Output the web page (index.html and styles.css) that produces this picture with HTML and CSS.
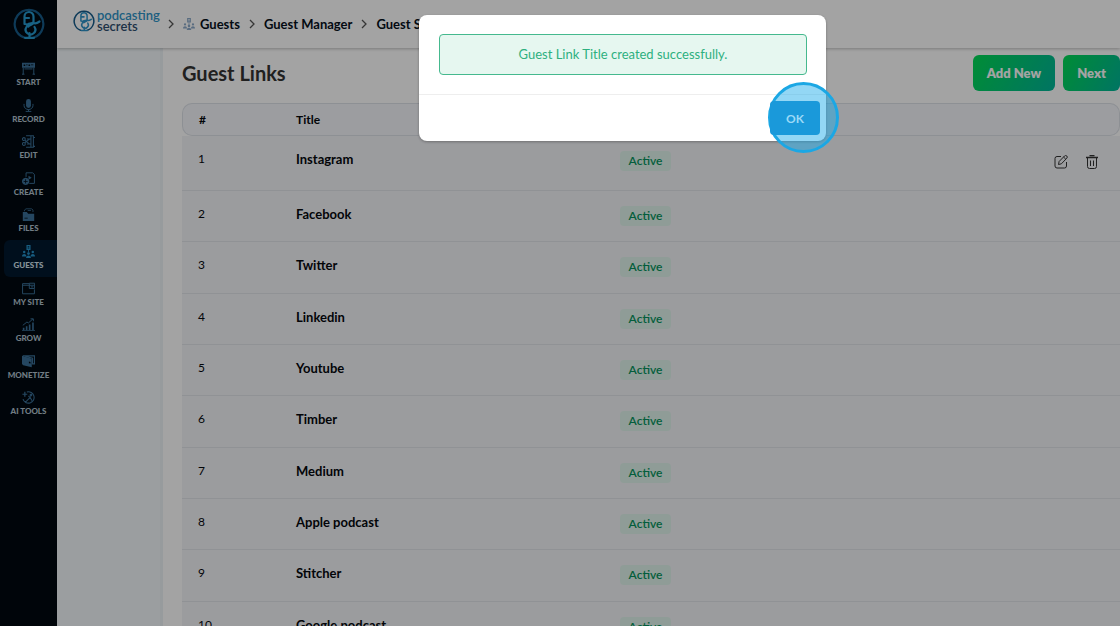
FILE: index.html
```html
<!DOCTYPE html>
<html lang="en">
<head>
<meta charset="utf-8">
<meta name="viewport" content="width=device-width, initial-scale=1">
<title>Guest Links</title>
<link rel="stylesheet" href="styles.css">
</head>
<body>
<svg class="sprite" aria-hidden="true">
  <symbol id="mic-mark" viewBox="0 0 32 32">
    <g fill="none" stroke="currentColor" stroke-linecap="round" stroke-linejoin="round">
      <path class="mark-ring" d="M11 29.500A14.300 14.300 0 1 1 21 29.500" stroke-width="2.200"/>
      <path stroke-width="2.200" d="M11.500 16V8.500a4.500 4.500 0 0 1 9 0V15M12 10h4M20.500 14c-1 2.500-4 0-6 2.500M20.500 15c2 1 4 0 6-1.500M20.500 15c-1 2-4 2-5 3.500M11.500 16c4 0 3 2 2 3a4.800 4.800 0 1 0 8 0M16.500 25v4.500M12 29.800h9"/>
    </g>
  </symbol>
  <symbol id="people" viewBox="0 0 16 16">
    <g fill="currentColor">
      <path fill-rule="evenodd" d="M5.500 0h5v6h-5zM7 1.200v1h2v-1zm0 2v1h2v-1z"/>
      <path d="M7.500 6h1v3h-1z"/>
      <circle cx="2.700" cy="8.500" r="1.500"/><circle cx="13.300" cy="8.500" r="1.500"/><circle cx="8" cy="10.500" r="1.700"/>
      <path d="M0 14c0-4 5.400-4 5.400 0zM10.600 14c0-4 5.400-4 5.400 0zM5 16c0-4.200 6-4.200 6 0z"/>
    </g>
  </symbol>
  <symbol id="chevron" viewBox="0 0 8 10"><path d="M2 1l4 4-4 4" fill="none" stroke="currentColor" stroke-width="1.300"/></symbol>
</svg>

<div class="app">
  <aside class="sidebar">
    <a class="brand-mark" href="#" aria-label="Home"><svg><use href="#mic-mark"/></svg></a>
    <nav class="menu" aria-label="Main">
      <a class="menu-item" href="#"><svg viewBox="0 0 16 16"><path fill-rule="evenodd" fill="currentColor" d="M0 1h16v6H0zM2 3v2h2V3zm3 0v1h2V3zm3 0v2h2V3zm3 0v1h3V3z"/><path d="M1.500 7v8M14.500 7v8M0 15h3M13 15h3M3 8.500h10" stroke="currentColor" stroke-width="1.200"/></svg>START</a>
      <a class="menu-item" href="#"><svg viewBox="0 0 16 16"><rect x="5" y="0" width="6" height="11" rx="3" fill="currentColor"/><path d="M2.500 6v2a5.500 5 0 0 0 11 0V6M8 13v2.300M4.500 15.300h7" fill="none" stroke="currentColor" stroke-width="1.200"/></svg>RECORD</a>
      <a class="menu-item" href="#"><svg viewBox="0 0 16 16" fill="none" stroke="currentColor" stroke-width="1.300"><path d="M5 1h9v14H5M11 1v14M6 5h5M6 11h5M14 3h2M14 14h2"/><circle cx="2.300" cy="5" r="1.800"/><circle cx="2.300" cy="11" r="1.800"/><path d="M3.500 6.500L9 11M3.500 9.500L9 5"/></svg>EDIT</a>
      <a class="menu-item" href="#"><svg viewBox="0 0 16 16"><path d="M5 6V1h8l2.300 2v11H9" fill="none" stroke="currentColor" stroke-width="1.200"/><path d="M8 4.500l4 2.500-4 2.500z" fill="currentColor"/><path fill-rule="evenodd" fill="currentColor" d="M4.500 7a4.500 4.500 0 1 0 .01 0zM4 9h1v2h2v1H5v2H4v-2H2v-1h2z"/></svg>CREATE</a>
      <a class="menu-item" href="#"><svg viewBox="0 0 16 16"><path d="M3 4V2.500L5 1h7l1.500 1.500V5M7 3h4" fill="none" stroke="currentColor"/><path fill-rule="evenodd" fill="currentColor" d="M1 5h5l1.500 2H15v9H1zM3 12v1h4v-1z"/></svg>FILES</a>
      <a class="menu-item active" href="#" aria-current="page"><svg><use href="#people"/></svg>GUESTS</a>
      <a class="menu-item" href="#"><svg viewBox="0 0 16 16" fill="none" stroke="currentColor" stroke-width="1.200"><path d="M9 2H.700v12.500h14.600V9M.700 4H9"/><path d="M9 1.500h6.500V8H9zM9 4h6.500M11 6h3"/></svg>MY SITE</a>
      <a class="menu-item" href="#"><svg viewBox="0 0 16 16" fill="none" stroke="currentColor"><path d="M1 9l5-4 2 1 5.500-5M10.500 1H14v3" stroke-width="1.200"/><path d="M2 12v3M5.700 10v5M9.400 8v7M13.500 5.500V15" stroke-width="2"/><path d="M0 15.500h16"/></svg>GROW</a>
      <a class="menu-item" href="#"><svg viewBox="0 0 16 16"><path d="M1 1h14.500v10H13V4L4 1.800" fill="none" stroke="currentColor" stroke-width="1.500"/><path fill-rule="evenodd" fill="currentColor" d="M0 1l12 3.500V15L1.500 12.500 0 11zM8.500 8v2l2 .5v-2z"/></svg>MONETIZE</a>
      <a class="menu-item" href="#"><svg viewBox="0 0 16 16" fill="none" stroke="currentColor" stroke-width="1.300"><path d="M6 1.200A7 7 0 1 1 1.200 10M4 14L11 7M8 6l4 5M11 12l2 1"/><path d="M3.500 1v6M.500 4h6" stroke-width="1.500"/><circle cx="11" cy="5" r="1"/></svg>AI TOOLS</a>
    </nav>
  </aside>

  <div class="content">
    <header class="topbar">
      <a class="logo" href="#"><svg><use href="#mic-mark"/></svg><span class="logo-text"><span class="logo-top">podcasting</span><span class="logo-bottom">secrets</span></span></a>
      <nav class="crumbs" aria-label="Breadcrumb">
        <svg class="chevron"><use href="#chevron"/></svg>
        <a class="crumb" href="#"><svg class="crumb-icon"><use href="#people"/></svg>Guests</a>
        <svg class="chevron"><use href="#chevron"/></svg>
        <a class="crumb" href="#">Guest Manager</a>
        <svg class="chevron"><use href="#chevron"/></svg>
        <a class="crumb" href="#">Guest Settings</a>
      </nav>
    </header>
    <div class="columns">
      <div class="subnav"></div>
      <main class="page">
        <div class="page-head">
          <h1 class="page-title">Guest Links</h1>
          <button class="action" type="button">Add New</button>
          <button class="action" type="button">Next</button>
        </div>
        <table class="links">
          <thead><tr><th class="col-num" scope="col">#</th><th class="col-title" scope="col">Title</th><th class="col-status"></th><th class="col-tools"></th></tr></thead>
          <tbody>
            <tr><td>1</td><td class="name">Instagram</td><td><span class="status">Active</span></td><td><div class="tools">
              <button class="tool" type="button" aria-label="Edit"><svg viewBox="0 0 14 14" fill="none" stroke="currentColor"><path d="M7 1.500H3a2 2 0 0 0-2 2V11a2 2 0 0 0 2 2h7.500a2 2 0 0 0 2-2V7"/><path d="M4.500 9.500l.6-3L10.500 1a1.400 1.400 0 0 1 2.300 2.200L7.400 8.800zM9.500 2l2.300 2.200"/></svg></button>
              <button class="tool" type="button" aria-label="Delete"><svg viewBox="0 0 14 14" fill="none" stroke="currentColor"><path d="M1 2.500h12M4.500.5h5" stroke-width="1.300"/><path d="M2.500 2.500v9a2 2 0 0 0 2 2h5a2 2 0 0 0 2-2v-9M5.500 5.500v5.500M8.500 5.500v5.500"/></svg></button>
            </div></td></tr>
            <tr><td>2</td><td class="name">Facebook</td><td><span class="status">Active</span></td><td></td></tr>
            <tr><td>3</td><td class="name">Twitter</td><td><span class="status">Active</span></td><td></td></tr>
            <tr><td>4</td><td class="name">Linkedin</td><td><span class="status">Active</span></td><td></td></tr>
            <tr><td>5</td><td class="name">Youtube</td><td><span class="status">Active</span></td><td></td></tr>
            <tr><td>6</td><td class="name">Timber</td><td><span class="status">Active</span></td><td></td></tr>
            <tr><td>7</td><td class="name">Medium</td><td><span class="status">Active</span></td><td></td></tr>
            <tr><td>8</td><td class="name">Apple podcast</td><td><span class="status">Active</span></td><td></td></tr>
            <tr><td>9</td><td class="name">Stitcher</td><td><span class="status">Active</span></td><td></td></tr>
            <tr><td>10</td><td class="name">Google podcast</td><td><span class="status">Active</span></td><td></td></tr>
          </tbody>
        </table>
      </main>
    </div>
  </div>
</div>

<div class="backdrop">
  <div class="dialog" role="dialog" aria-modal="true" aria-label="Result">
    <div class="dialog-body"><p class="alert">Guest Link Title created successfully.</p></div>
    <div class="dialog-foot"><span class="ok-wrap"><button class="ok" type="button">OK</button><span class="click-ring"></span></span></div>
  </div>
</div>
</body>
</html>
```

FILE: styles.css
```css
* { box-sizing: border-box; }
body { margin: 0; font-family: Lato, "Open Sans", sans-serif; font-size: 14px; color: #05080d; background: #fff; overflow: hidden; }
a { color: inherit; text-decoration: none; }
button { font: inherit; border: 0; cursor: pointer; }
.sprite { position: absolute; width: 0; height: 0; }

.app { display: flex; height: 100vh; overflow: hidden; }

.sidebar { width: 57px; flex: none; background: #000910; }
.brand-mark { display: flex; justify-content: center; padding-top: 8px; height: 57px; color: #2699cf; }
.brand-mark svg { width: 32px; height: 32px; }
.mark-ring { stroke: #175d8b; }
.menu { display: flex; flex-direction: column; height: 366px; padding-left: 4px; }
.menu-item { flex: 1; display: flex; flex-direction: column; align-items: center; gap: 2px; padding: 5px 4px 0 0; border-radius: 6px 0 0 6px; font-size: 8px; line-height: 10px; font-weight: 900; color: #b2c3cf; white-space: nowrap; }
.menu-item svg { width: 13px; height: 13px; flex: none; color: #3a7098; }
.menu-item.active { background: #00182e; color: #d5e4ee; }
.menu-item.active svg { color: #2490c8; }

.content { flex: 1; min-width: 0; display: flex; flex-direction: column; }
.topbar { position: relative; display: flex; align-items: center; height: 48px; flex: none; padding-left: 16px; background: #fff; box-shadow: 0 1px 3px rgba(0, 0, 0, .25); }
.logo { display: flex; gap: 2px; align-items: center; width: 86px; height: 28px; margin-bottom: 6px; color: #2f94c8; }
.logo svg { width: 22px; height: 22px; flex: none; }
.logo .logo-text { display: flex; flex-direction: column; font-size: 13px; line-height: 11px; font-weight: 600; }
.logo-bottom { color: #304f70; }
.crumbs { display: flex; align-items: center; gap: 8px; margin-left: 8px; white-space: nowrap; }
.chevron { width: 8px; height: 10px; color: #555; }
.crumb { display: flex; align-items: center; gap: 5px; font-size: 13px; font-weight: 700; color: #06101c; }
.crumb-icon { width: 12px; height: 12px; color: #8baac9; }

.columns { flex: 1; display: flex; min-height: 0; }
.subnav { width: 106px; flex: none; background: #f2f8fa; border-right: 3px solid #ecf2f6; }
.page { flex: 1; min-width: 0; padding: 7px 0 0 19px; }
.page-head { display: flex; gap: 8px; align-items: center; margin-bottom: 12px; }
.page-title { flex: 1; margin: 0; font-size: 20px; line-height: 24px; font-weight: 700; color: #333; }
.action { height: 36px; padding: 0 14px; border-radius: 6px; color: #fff; font-size: 13px; font-weight: 800; background: linear-gradient(120deg, #00dc55, #00b69b); }

.links { width: 100%; table-layout: fixed; border-collapse: separate; border-spacing: 0; }
.links th { height: 33px; padding: 0 16px; text-align: left; font-size: 12px; font-weight: 700; background: #f4f6fa; border: solid #dde1e8; border-width: 1px 0; }
.links th:first-child { border-left-width: 1px; border-radius: 10px 0 0 10px; }
.links th:last-child { border-right-width: 1px; border-radius: 0 10px 10px 0; }
.links .col-num { width: 98px; }
.links .col-title { width: 34.5%; }
.links .col-tools { width: 12%; }
.links td { height: 51px; padding: 14px 16px 0; vertical-align: top; line-height: 18px; font-size: 12px; background: #f3f4f8; border-bottom: 1px solid #e1e4ea; }
.links tbody tr:nth-child(3n) td { height: 52px; }
.links tbody tr:first-child td { height: 55px; }
.links .name { font-size: 13px; font-weight: 700; }
.status { display: inline-block; margin-top: 1px; padding: 1px 9px; border-radius: 4px; background: #e0f4ec; color: #06945e; font-size: 12px; font-weight: 600; }
.tools { display: flex; justify-content: flex-end; gap: 17px; padding: 5px 5px 0 0; }
.tool { display: flex; padding: 0; background: none; color: #333; }
.tool svg { width: 14px; height: 14px; }

.backdrop { position: fixed; inset: 0; padding: 15px 0 0 125px; display: flex; justify-content: center; align-items: flex-start; background: rgba(0, 0, 0, .36); }
.dialog { width: 407px; border-radius: 8px; background: #fff; box-shadow: 0 1px 3px rgba(0, 0, 0, .3); }
.dialog-body { padding: 19px 19px 19px 20px; }
.alert { margin: 0; padding: 10px; border: 1px solid #45b98e; border-radius: 4px; background: #e6f7f0; color: #2eb07f; font-size: 13px; line-height: 19px; text-align: center; }
.dialog-foot { display: flex; justify-content: flex-end; padding: 6px; border-top: 1px solid #eee; }
.ok-wrap { position: relative; display: block; }
.ok { position: relative; z-index: 1; display: block; width: 50px; height: 34px; border-radius: 4px; background: #1a99da; color: #9cd9f7; font-size: 12px; font-weight: 700; }
.click-ring { position: absolute; left: -2px; top: -19px; width: 71px; height: 71px; border: 3px solid #1ba7e4; border-radius: 50%; background: rgba(29, 172, 235, .48); pointer-events: none; }
```
